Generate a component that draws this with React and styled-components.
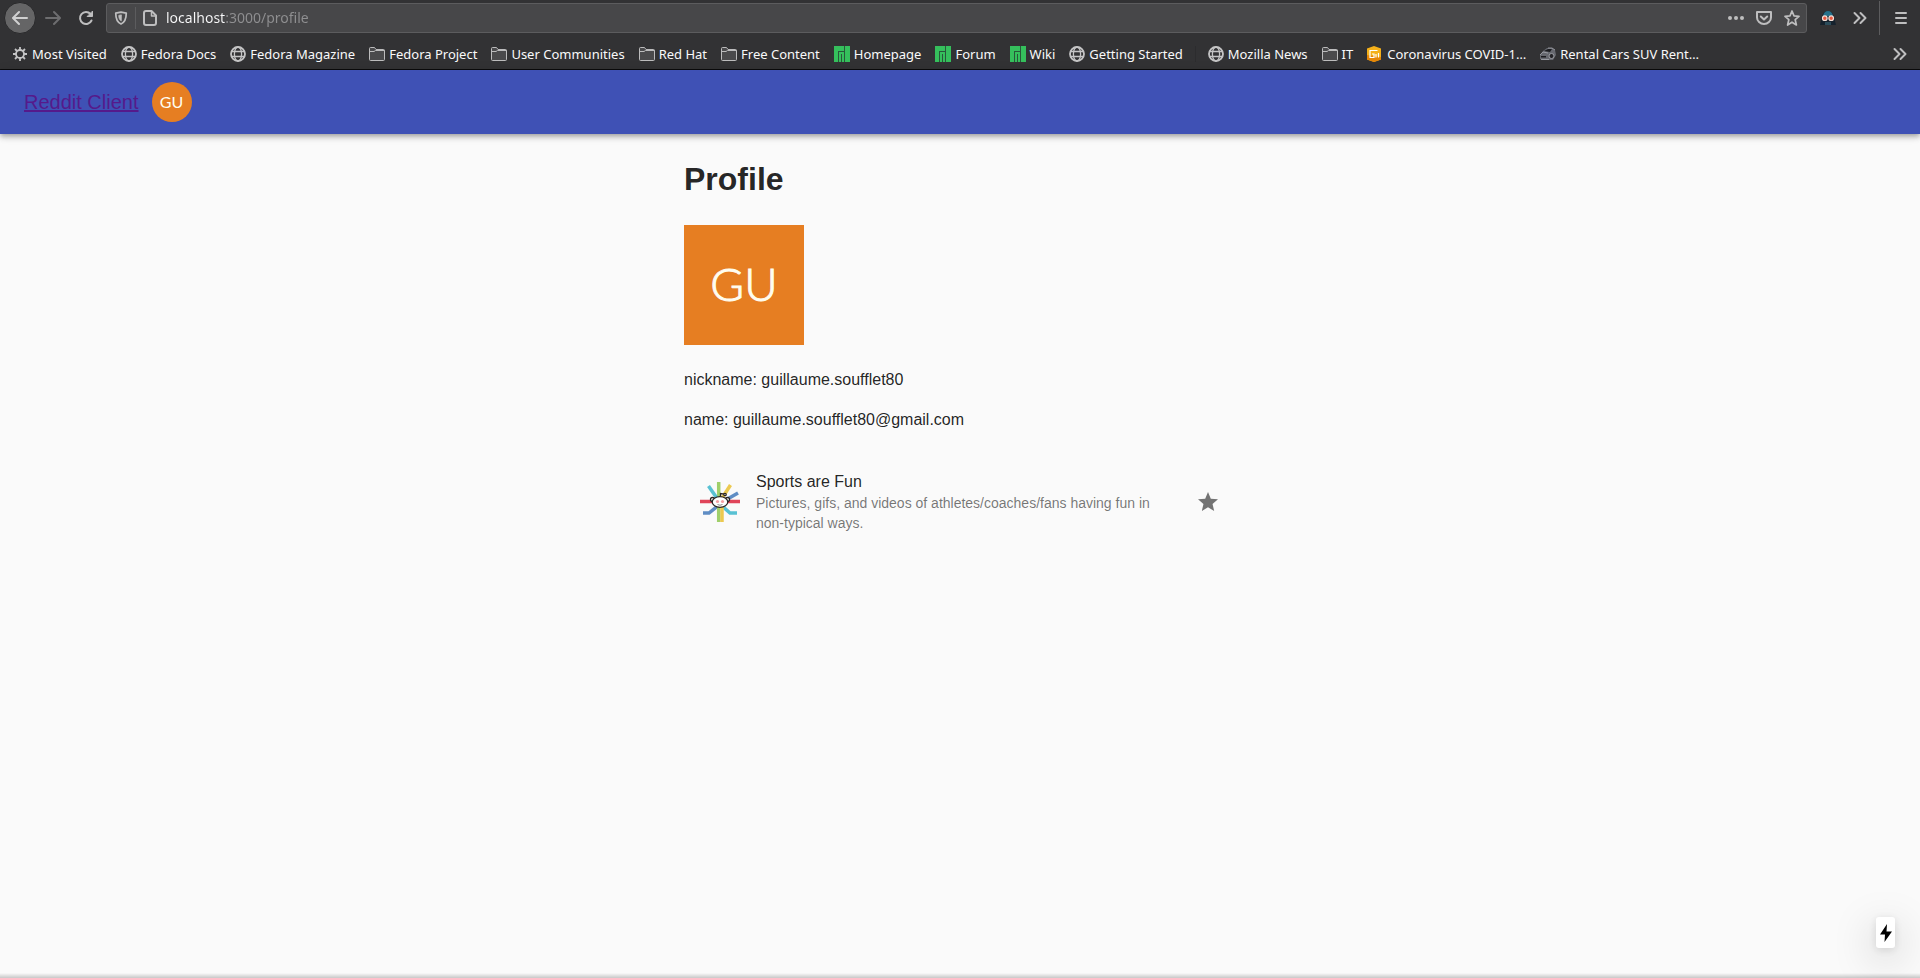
import React from "react";
import styled, { createGlobalStyle } from "styled-components";

const uiFont = '"Noto Sans", sans-serif';
const appFont = '"Liberation Sans", Arial, sans-serif';

const GlobalStyle = createGlobalStyle`
  *, *::before, *::after { box-sizing: border-box; }
  body {
    margin: 0;
    background: #fafafa;
    color: rgba(0, 0, 0, 0.87);
    font-family: ${appFont};
    font-size: 16px;
    line-height: 24px;
  }
`;

const Page = styled.div`
  min-height: 100vh;
  display: flex;
  flex-direction: column;
`;

/* Browser chrome */
const Chrome = styled.header`
  background: #323234;
  border-bottom: 1px solid #0c0c0d;
  font-family: ${uiFont};
  color: #f9f9fa;
`;

const NavBar = styled.div`
  display: flex;
  align-items: center;
  height: 36px;
  padding: 0 6px 0 4px;
`;

const ToolButton = styled.button`
  display: flex;
  align-items: center;
  justify-content: center;
  flex: none;
  width: ${(p) => p.$width || 32}px;
  height: 32px;
  padding: 0;
  border: 0;
  background: none;
  color: ${(p) => (p.$dim ? "#6d6d6f" : "#bebebf")};
`;

const BackButton = styled(ToolButton)`
  border: 1px solid #28282a;
  border-radius: 50%;
  background: #656566;
  color: #d0d0d0;
`;

const UrlBar = styled.div`
  flex: 1;
  min-width: 0;
  height: 30px;
  display: flex;
  align-items: center;
  margin-left: 4px;
  background: #474749;
  border: 1px solid #5c5c5e;
  border-radius: 3px;
`;

const Divider = styled.span`
  flex: none;
  width: 1px;
  height: ${(p) => p.$height}px;
  background: #5c5c5e;
`;

const DividerSlot = styled.span`
  display: flex;
  justify-content: center;
  flex: none;
  width: 17px;
`;

const BookmarkDivider = styled(Divider)`
  margin: 0 -2px;
  background: #2c2c2e;
`;

const UrlInput = styled.input`
  flex: 1;
  min-width: 0;
  height: 28px;
  margin-left: 2px;
  padding: 0 0 2px;
  border: 0;
  outline: 0;
  font-family: ${uiFont};
  font-size: 14px;
  color: #8f8f91;
  background: linear-gradient(to right, #f9f9fa 60px, #8f8f91 60px);
  background-clip: text;
  -webkit-text-fill-color: transparent;
`;

const Bookmarks = styled.nav`
  display: flex;
  align-items: center;
  gap: 14px;
  height: 33px;
  padding: 2px 8px 0 12px;
`;

const Bookmark = styled.a`
  display: flex;
  align-items: center;
  gap: 4px;
  flex: none;
  font-size: 13px;
  line-height: 18px;
  color: #f9f9fa;
  text-decoration: none;
  white-space: nowrap;
`;

const BookmarkIcon = styled.svg`
  width: 16px;
  height: 16px;
  flex: none;
`;

const OverflowSlot = styled.div`
  margin-left: auto;
  display: flex;
`;

/* Reddit client */
const AppBar = styled.header`
  display: flex;
  align-items: center;
  gap: 13px;
  height: 64px;
  padding: 0 24px;
  background: #3f51b5;
  box-shadow: 0 2px 4px -1px rgba(0, 0, 0, 0.2), 0 4px 5px 0 rgba(0, 0, 0, 0.14),
    0 1px 10px 0 rgba(0, 0, 0, 0.12);
`;

const Brand = styled.a`
  font-size: 20px;
  line-height: 32px;
  color: #551a8b;
  text-decoration: underline;
`;

const Avatar = styled.div`
  display: flex;
  align-items: center;
  justify-content: center;
  flex: none;
  width: ${(p) => (p.$large ? 120 : 40)}px;
  height: ${(p) => (p.$large ? 120 : 40)}px;
  padding-bottom: ${(p) => (p.$large ? 2 : 0)}px;
  border-radius: ${(p) => (p.$large ? "0" : "50%")};
  background: #e67e22;
  color: #fffdf0;
  font-family: Lato, sans-serif;
  font-weight: ${(p) => (p.$large ? 300 : 400)};
  font-size: ${(p) => (p.$large ? 46 : 16)}px;
  line-height: 1;
  -webkit-text-stroke: ${(p) => (p.$large ? "1px #fffdf0" : "0")};
`;

const Container = styled.main`
  flex: 1;
  width: 100%;
  max-width: 600px;
  margin: 0 auto;
  padding: 22px 24px 0;
`;

const Heading = styled.h1`
  margin: 0 0 23px;
  font-size: 32px;
  line-height: 46px;
`;

const Details = styled.div`
  display: flex;
  flex-direction: column;
  gap: 16px;
  margin: 23px 0 16px;
`;

const Detail = styled.p`
  margin: 0;
`;

const List = styled.ul`
  list-style: none;
  margin: 0;
  padding: 8px 0;
`;

const ListItem = styled.li`
  display: flex;
  align-items: center;
  gap: 16px;
  padding: 14px 4px 14px 16px;
`;

const ItemText = styled.div`
  flex: 1;
  min-width: 0;
`;

const Primary = styled.div`
  line-height: 23px;
`;

const Secondary = styled.div`
  font-size: 14px;
  line-height: 20px;
  color: rgba(0, 0, 0, 0.54);
`;

const StarButton = styled.button`
  display: flex;
  flex: none;
  padding: 12px;
  border: 0;
  background: none;
  color: rgba(0, 0, 0, 0.54);
`;

const DevBadge = styled.div`
  position: fixed;
  right: 25px;
  bottom: 30px;
  width: 19px;
  height: 31px;
  display: flex;
  align-items: center;
  justify-content: center;
  background: #fff;
  border-radius: 3px;
  box-shadow: 0 11px 40px 0 rgba(0, 0, 0, 0.25), 0 2px 10px 0 rgba(0, 0, 0, 0.12);
`;

const BottomEdge = styled.div`
  height: 5px;
  background: linear-gradient(#fafafa, #c8c8c8);
`;

const Stroke = ({ size = 16, width = 2, children }) => (
  <svg width={size} height={size} viewBox="0 0 16 16" fill="none" stroke="currentColor" strokeWidth={width} strokeLinecap="round" strokeLinejoin="round" aria-hidden="true">
    {children}
  </svg>
);

const Chevrons = () => (
  <Stroke>
    <path d="M2.500 3l5 5-5 5M8.500 3l5 5-5 5" />
  </Stroke>
);

const Gear = () => (
  <BookmarkIcon viewBox="0 0 16 16" fill="none" stroke="#c4c4c5" aria-hidden="true">
    <circle cx="8" cy="8" r="4" strokeWidth="1.8" />
    <path d="M8 1v3M8 12v3M1 8h3M12 8h3M3 3l2.1 2.1M10.9 10.9L13 13M3 13l2.1-2.1M10.9 5.1L13 3" strokeWidth="1.8" />
  </BookmarkIcon>
);

const Globe = () => (
  <BookmarkIcon viewBox="0 0 16 16" fill="none" stroke="#c4c4c5" aria-hidden="true">
    <circle cx="8" cy="8" r="7" strokeWidth="1.8" />
    <ellipse cx="8" cy="8" rx="3.6" ry="7" strokeWidth="1.3" />
    <path d="M1.6 5.5h12.8M1.6 10.5h12.8" strokeWidth="1.3" />
  </BookmarkIcon>
);

const Folder = () => (
  <BookmarkIcon viewBox="0 0 16 16" fill="#4a4a4c" stroke="#bcbcbd" aria-hidden="true">
    <path d="M.5 13.5v-11q0-1 1-1h4l1.5 2h7.5q1 0 1 1v9q0 1-1 1h-13q-1 0-1-1z" />
    <path d="M.5 5.5h4.5l1.5-1h9" fill="none" />
  </BookmarkIcon>
);

const Manjaro = () => (
  <BookmarkIcon viewBox="0 0 16 16" aria-hidden="true">
    <path d="M0 0h16v16H0z" fill="#35bf5c" />
    <path d="M4 16V5h6v1H5v10zM10 0h1v16h-1zM7 8h1v8H7z" fill="#28573a" />
  </BookmarkIcon>
);

const Hexagon = () => (
  <BookmarkIcon viewBox="0 0 16 16" aria-hidden="true">
    <path d="M7 0l7 2.5v11L7 16l-7-2.500v-11z" fill="#f4b01a" />
    <path d="M0 9l14 2v2.500L7 16l-7-2.500z" fill="#e58507" />
    <path d="M10.500 4.500H3v7h4V8H5M9 8v3.500M11.500 7v4.500" fill="none" stroke="#fff" strokeWidth="1.2" />
  </BookmarkIcon>
);

const Car = () => (
  <BookmarkIcon viewBox="0 0 16 16" aria-hidden="true">
    <path d="M0 9l3-4 4-3h5l3 2 1 5-3 5H3l-3-1z" fill="#66686f" />
    <path d="M4 5l4-2h4l-2 3z" fill="#1c1d20" />
    <path d="M0 9l3-3 5 1M1 13.500h8M8 2h4l3 2" fill="none" stroke="#a6a8b0" strokeWidth=".8" />
    <circle cx="11.5" cy="10" r="2.5" fill="#242428" stroke="#9a9ca2" />
    <path d="M1 10h5v1.500H1z" fill="#1c1c20" />
  </BookmarkIcon>
);

const Mask = () => (
  <svg width="16" height="16" viewBox="0 0 16 16" aria-hidden="true">
    <path d="M2 7q1-6 6-6t6 6l2 8H0z" fill="#16222d" />
    <path d="M3 6q1-5 5-5t5 5z" fill="#27718a" />
    <path d="M5 12h6v3H5z" fill="#2b4c5a" />
    <circle cx="4.8" cy="8.2" r="2.3" fill="#e8573f" stroke="#f6dfd5" strokeWidth="1.2" />
    <circle cx="11.2" cy="8.2" r="2.3" fill="#e8573f" stroke="#f6dfd5" strokeWidth="1.2" />
  </svg>
);

const SportsLogo = () => (
  <svg width="40" height="40" viewBox="0 0 40 40" fill="none" strokeWidth="3.5" aria-hidden="true">
    <path d="M18.700 0v20" stroke="#9fcf6a" />
    <path d="M8.500 4l9 13" stroke="#58c1d3" />
    <path d="M30.500 3l-9 14" stroke="#ecc94f" />
    <path d="M38 11L24 19" stroke="#5f8dc4" />
    <path d="M0 19.500h40" stroke="#e0455a" />
    <path d="M3 31h6l10-8" stroke="#5f8dc4" />
    <path d="M37 31h-7l-9-8" stroke="#58c1d3" />
    <path d="M18.700 22v18" stroke="#9fcf6a" />
    <path d="M22 22v18" stroke="#ecc94f" />
    <g stroke="#2b2523" strokeWidth="1.3" fill="#fff">
      <circle cx="12.5" cy="17.5" r="2" />
      <circle cx="27.5" cy="17.5" r="2" />
      <ellipse cx="20" cy="20" rx="7.8" ry="5.3" />
      <path d="M20.500 14.500v-3l4 .7" fill="none" />
      <circle cx="25" cy="12.5" r="1.2" />
    </g>
    <circle cx="17.5" cy="19.5" r="1.6" fill="#f3a0a4" />
    <circle cx="22.5" cy="19.5" r="1.6" fill="#f3a0a4" />
    <path d="M17.500 22.500q2.500 1.500 5 0" stroke="#555" strokeWidth=".7" />
  </svg>
);

const bookmarks = [
  [Gear, "Most Visited"],
  [Globe, "Fedora Docs"],
  [Globe, "Fedora Magazine"],
  [Folder, "Fedora Project"],
  [Folder, "User Communities"],
  [Folder, "Red Hat"],
  [Folder, "Free Content"],
  [Manjaro, "Homepage"],
  [Manjaro, "Forum"],
  [Manjaro, "Wiki"],
  [Globe, "Getting Started"],
  null,
  [Globe, "Mozilla News"],
  [Folder, "IT"],
  [Hexagon, "Coronavirus COVID-1…"],
  [Car, "Rental Cars SUV Rent…"],
];

export default function App() {
  return (
    <Page>
      <GlobalStyle />
      <Chrome>
        <NavBar>
          <BackButton aria-label="Back">
            <Stroke><path d="M15 8H1.500M7 2L1 8l6 6" /></Stroke>
          </BackButton>
          <ToolButton aria-label="Forward" $width={34} $dim>
            <Stroke><path d="M1 8h13.500M9 2l6 6-6 6" /></Stroke>
          </ToolButton>
          <ToolButton aria-label="Reload">
            <Stroke>
              <path d="M13.500 10.500A6 6 0 1 1 12.500 4" />
              <path d="M14.500 1.500v5h-5z" fill="currentColor" strokeWidth="1" />
            </Stroke>
          </ToolButton>
          <UrlBar>
            <ToolButton aria-label="Tracking protection" $width={28}>
              <Stroke size={14}>
                <path d="M8 1.200L14 2.500c0 6-1 10-6 12.300C3 12.500 2 8.500 2 2.500z" />
                <path d="M8 4.500L5.500 5c0 3 .7 5 2.500 6z" fill="currentColor" strokeWidth="1" />
              </Stroke>
            </ToolButton>
            <Divider $height={22} />
            <ToolButton aria-label="Site information" $width={28}>
              <Stroke>
                <path d="M4 1h5.500L14 5.500V13q0 2-2 2H4q-2 0-2-2V3q0-2 2-2z" />
                <path d="M9.500 1.500V6H14" strokeWidth="1.5" />
              </Stroke>
            </ToolButton>
            <UrlInput aria-label="Address" defaultValue="localhost:3000/profile" />
            <ToolButton aria-label="Page actions" $width={28}>
              <svg width="16" height="16" viewBox="0 0 16 16" fill="currentColor" aria-hidden="true">
                <circle cx="2" cy="8" r="2" /><circle cx="8" cy="8" r="2" /><circle cx="14" cy="8" r="2" />
              </svg>
            </ToolButton>
            <ToolButton aria-label="Save to Pocket" $width={28}>
              <Stroke>
                <path d="M1 2h14v5.500a7 6.500 0 0 1-14 0z" />
                <path d="M4.800 6.500L8 9.500l3.200-3" />
              </Stroke>
            </ToolButton>
            <ToolButton aria-label="Bookmark this page" $width={28}>
              <Stroke>
                <path d="M8 1l2 4.800 5 .5-3.800 3.400L12.400 15 8 12.200 3.600 15l1.200-5.300L1 6.300l5-.5z" strokeWidth="1.7" />
              </Stroke>
            </ToolButton>
          </UrlBar>
          <ToolButton aria-label="Extension" $width={42}><Mask /></ToolButton>
          <ToolButton aria-label="More tools" $width={22}><Chevrons /></ToolButton>
          <DividerSlot><Divider $height={34} /></DividerSlot>
          <ToolButton aria-label="Menu" $width={26}>
            <Stroke><path d="M3 3h10M3 8h10M3 13h10" /></Stroke>
          </ToolButton>
        </NavBar>
        <Bookmarks aria-label="Bookmarks">
          {bookmarks.map((item, i) => {
            if (!item) return <BookmarkDivider key={i} $height={16} />;
            const [Icon, label] = item;
            return (
              <Bookmark key={i} href="#">
                <Icon />
                {label}
              </Bookmark>
            );
          })}
          <OverflowSlot>
            <ToolButton aria-label="More bookmarks" $width={24}><Chevrons /></ToolButton>
          </OverflowSlot>
        </Bookmarks>
      </Chrome>
      <AppBar>
        <Brand href="#">Reddit Client</Brand>
        <Avatar>GU</Avatar>
      </AppBar>
      <Container>
        <Heading>Profile</Heading>
        <Avatar $large>GU</Avatar>
        <Details>
          <Detail>nickname: guillaume.soufflet80</Detail>
          <Detail>name: guillaume.soufflet80@gmail.com</Detail>
        </Details>
        <List>
          <ListItem>
            <SportsLogo />
            <ItemText>
              <Primary>Sports are Fun</Primary>
              <Secondary>
                Pictures, gifs, and videos of athletes/coaches/fans having fun in non-typical ways.
              </Secondary>
            </ItemText>
            <StarButton aria-label="Unstar">
              <svg width="24" height="24" viewBox="0 0 24 24" fill="currentColor" aria-hidden="true">
                <path d="M12 17.270L18.180 21l-1.640-7.030L22 9.240l-7.190-.61L12 2 9.190 8.630 2 9.240l5.460 4.730L5.820 21z" />
              </svg>
            </StarButton>
          </ListItem>
        </List>
      </Container>
      <BottomEdge />
      <DevBadge>
        <svg width="12" height="18" viewBox="0 0 12 18" fill="#000" aria-hidden="true">
          <path d="M7 0L0 10.500h5L4.500 18 12 7.500H6.500z" />
        </svg>
      </DevBadge>
    </Page>
  );
}
